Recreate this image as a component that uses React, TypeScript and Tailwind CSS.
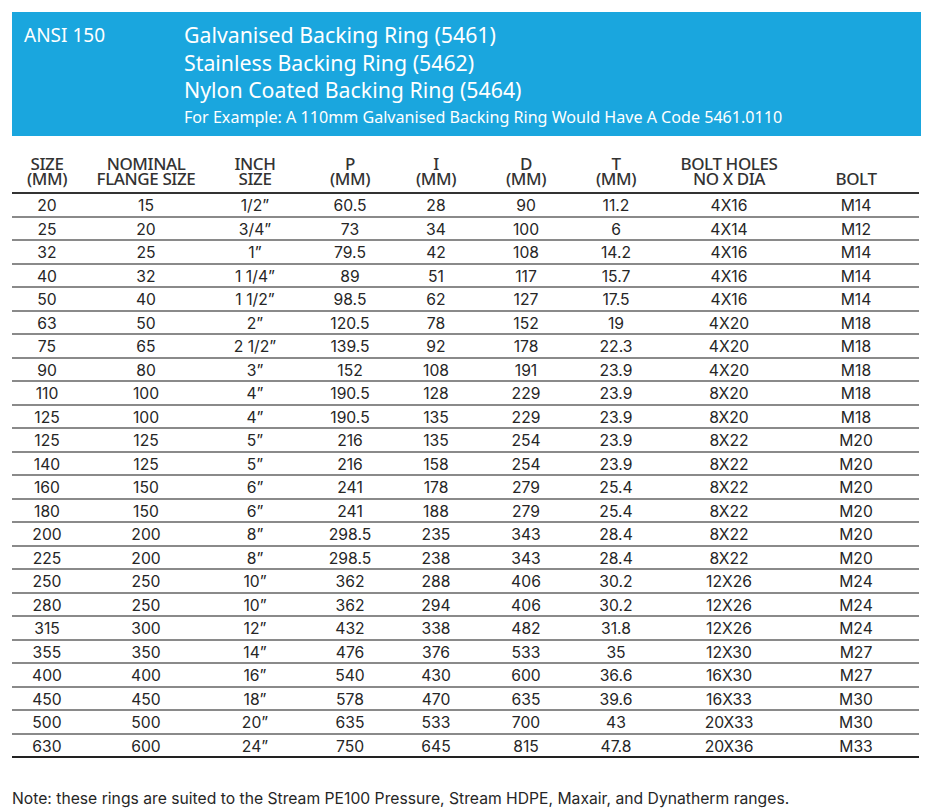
import React from 'react';

type Row = [string, string, string, string, string, string, string, string, string];

const rows: Row[] = [
  ['20', '15', '1/2”', '60.5', '28', '90', '11.2', '4X16', 'M14'],
  ['25', '20', '3/4”', '73', '34', '100', '6', '4X14', 'M12'],
  ['32', '25', '1”', '79.5', '42', '108', '14.2', '4X16', 'M14'],
  ['40', '32', '1 1/4”', '89', '51', '117', '15.7', '4X16', 'M14'],
  ['50', '40', '1 1/2”', '98.5', '62', '127', '17.5', '4X16', 'M14'],
  ['63', '50', '2”', '120.5', '78', '152', '19', '4X20', 'M18'],
  ['75', '65', '2 1/2”', '139.5', '92', '178', '22.3', '4X20', 'M18'],
  ['90', '80', '3”', '152', '108', '191', '23.9', '4X20', 'M18'],
  ['110', '100', '4”', '190.5', '128', '229', '23.9', '8X20', 'M18'],
  ['125', '100', '4”', '190.5', '135', '229', '23.9', '8X20', 'M18'],
  ['125', '125', '5”', '216', '135', '254', '23.9', '8X22', 'M20'],
  ['140', '125', '5”', '216', '158', '254', '23.9', '8X22', 'M20'],
  ['160', '150', '6”', '241', '178', '279', '25.4', '8X22', 'M20'],
  ['180', '150', '6”', '241', '188', '279', '25.4', '8X22', 'M20'],
  ['200', '200', '8”', '298.5', '235', '343', '28.4', '8X22', 'M20'],
  ['225', '200', '8”', '298.5', '238', '343', '28.4', '8X22', 'M20'],
  ['250', '250', '10”', '362', '288', '406', '30.2', '12X26', 'M24'],
  ['280', '250', '10”', '362', '294', '406', '30.2', '12X26', 'M24'],
  ['315', '300', '12”', '432', '338', '482', '31.8', '12X26', 'M24'],
  ['355', '350', '14”', '476', '376', '533', '35', '12X30', 'M27'],
  ['400', '400', '16”', '540', '430', '600', '36.6', '16X30', 'M27'],
  ['450', '450', '18”', '578', '470', '635', '39.6', '16X33', 'M30'],
  ['500', '500', '20”', '635', '533', '700', '43', '20X33', 'M30'],
  ['630', '600', '24”', '750', '645', '815', '47.8', '20X36', 'M33'],
];

const headers: [string, string][] = [
  ['SIZE', '(MM)'],
  ['NOMINAL', 'FLANGE SIZE'],
  ['INCH', 'SIZE'],
  ['P', '(MM)'],
  ['I', '(MM)'],
  ['D', '(MM)'],
  ['T', '(MM)'],
  ['BOLT HOLES', 'NO X DIA'],
  ['', 'BOLT'],
];

const widths = [70, 128, 90, 100, 72, 108, 72, 154, 100, 13];

export default function App() {
  return (
    <div className="w-[933px] h-[810px] bg-white pt-3 px-3 font-['Inter',sans-serif] text-[#262626]">
      {/* Banner */}
      <div className="h-[124px] bg-[#1aa6de] text-white flex font-['Noto_Sans',sans-serif]">
        <div className="w-[172px] pl-3 pt-[10px] text-[19px] leading-[27px]">ANSI 150</div>
        <div className="pt-[9px]">
          <div className="text-[21.3px] leading-[27.5px]">Galvanised Backing Ring (5461)</div>
          <div className="text-[21.3px] leading-[27.5px]">Stainless Backing Ring (5462)</div>
          <div className="text-[21.3px] leading-[27.5px]">Nylon Coated Backing Ring (5464)</div>
          <div className="text-[16.1px] leading-[24px] mt-[1px]">
            For Example: A 110mm Galvanised Backing Ring Would Have A Code 5461.0110
          </div>
        </div>
      </div>

      {/* Table */}
      <table className="mt-[20px] w-[907px] border-collapse table-fixed">
        <colgroup>
          {widths.map((w, i) => (
            <col key={i} style={{ width: w }} />
          ))}
        </colgroup>
        <thead>
          <tr className="border-b-2 border-[#333]">
            {headers.map(([a, b], i) => (
              <th
                key={i}
                className="align-bottom pb-[6px] text-center text-[17px] leading-[15px] font-medium text-[#333] tracking-[-0.4px] font-['Noto_Sans',sans-serif]"
              >
                {a && <div>{a}</div>}
                <div>{b}</div>
              </th>
            ))}
            <th />
          </tr>
        </thead>
        <tbody>
          {rows.map((r, ri) => (
            <tr
              key={ri}
              className={
                ri === rows.length - 1
                  ? 'border-b-2 border-[#222]'
                  : 'border-b-2 border-[#8a8a8a]'
              }
            >
              {r.map((c, ci) => (
                <td key={ci} className="h-[23.5px] p-0 pt-[3px] text-center text-[15.7px] leading-[18.5px]">
                  {c}
                </td>
              ))}
              <td />
            </tr>
          ))}
        </tbody>
      </table>

      <p className="mt-[31px] text-[15.7px] leading-[20px]">
        Note: these rings are suited to the Stream PE100 Pressure, Stream HDPE, Maxair, and Dynatherm ranges.
      </p>
    </div>
  );
}
